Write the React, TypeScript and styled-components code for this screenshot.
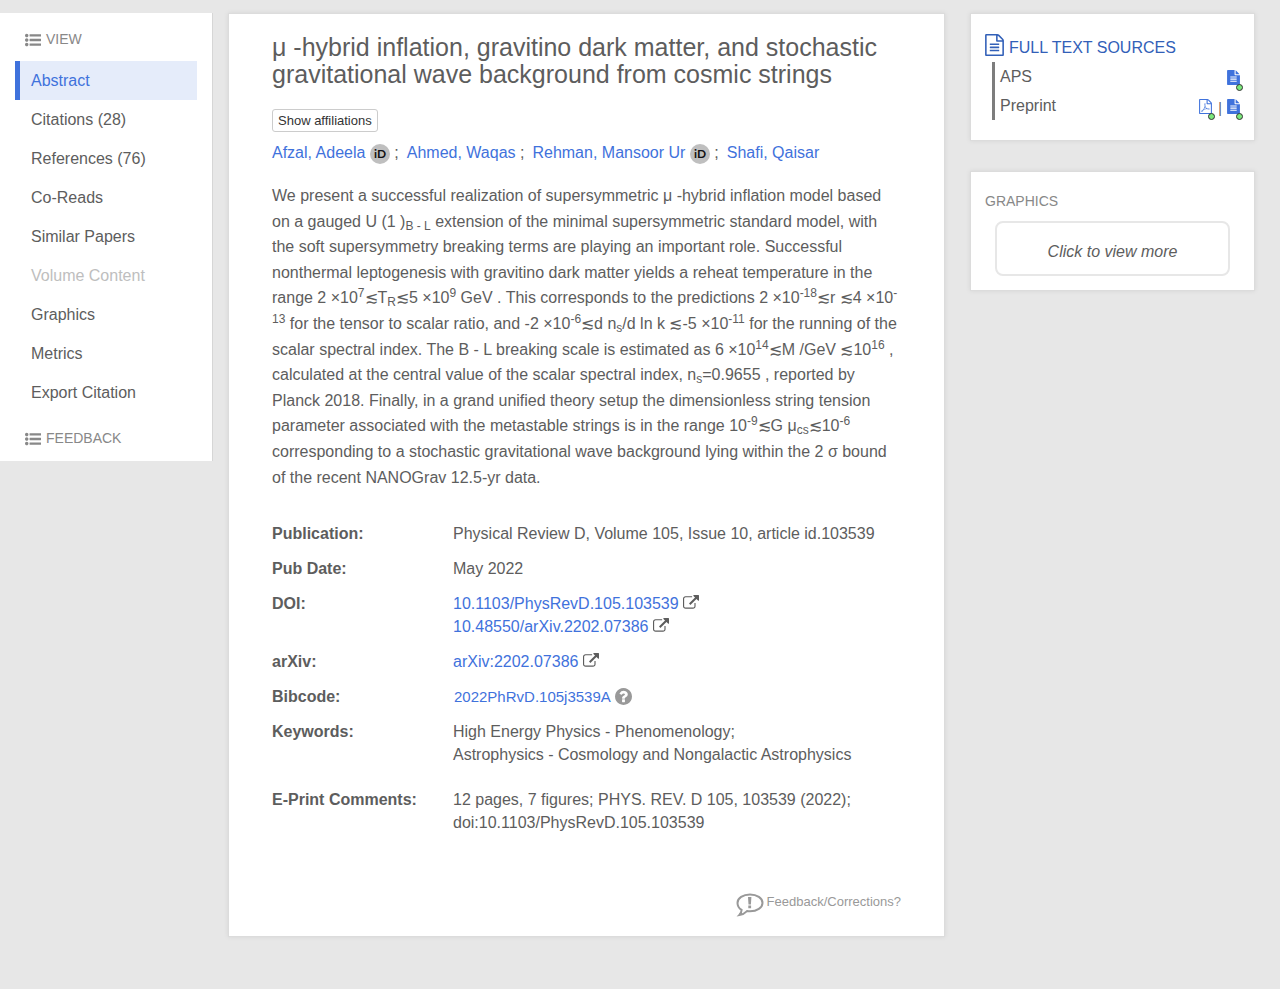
import React from "react";
import styled, { createGlobalStyle } from "styled-components";

const GlobalStyle = createGlobalStyle`
  *, *::before, *::after { box-sizing: border-box; }
  body {
    margin: 0;
    background: #e7e7e7;
    color: #5d5d5d;
    font-family: "Liberation Sans", Arial, sans-serif;
    font-size: 16px;
    line-height: 23px;
  }
  a { color: #3f72dc; text-decoration: none; }
  a:hover { text-decoration: underline; }
`;

/* ---------- icons ---------- */

const Icon = styled.svg<{ $w: number; $h: number }>`
  width: ${(p) => p.$w}px;
  height: ${(p) => p.$h}px;
  flex: none;
  fill: currentColor;
`;

const ListIcon = () => (
  <Icon $w={16} $h={16} viewBox="0 0 1792 1792" aria-hidden="true">
    <path d="M384 1408q0 80-56 136t-136 56-136-56-56-136 56-136 136-56 136 56 56 136zm0-512q0 80-56 136t-136 56-136-56-56-136 56-136 136-56 136 56 56 136zm1408 416v192q0 13-9.5 22.5t-22.5 9.5h-1216q-13 0-22.5-9.5t-9.5-22.5v-192q0-13 9.5-22.5t22.5-9.5h1216q13 0 22.5 9.5t9.5 22.5zm-1408-928q0 80-56 136t-136 56-136-56-56-136 56-136 136-56 136 56 56 136zm1408 416v192q0 13-9.5 22.5t-22.5 9.5h-1216q-13 0-22.5-9.5t-9.5-22.5v-192q0-13 9.5-22.5t22.5-9.5h1216q13 0 22.5 9.5t9.5 22.5zm0-512v192q0 13-9.5 22.5t-22.5 9.5h-1216q-13 0-22.5-9.5t-9.5-22.5v-192q0-13 9.5-22.5t22.5-9.5h1216q13 0 22.5 9.5t9.5 22.5z" />
  </Icon>
);

const InlineIcon = styled(Icon)`
  vertical-align: -2px;
`;

const ExternalIcon = () => (
  <InlineIcon $w={16} $h={16} viewBox="0 0 1792 1792" aria-hidden="true">
    <path d="M1408 928v320q0 119-84.5 203.5t-203.5 84.5h-832q-119 0-203.5-84.5t-84.5-203.5v-832q0-119 84.5-203.5t203.5-84.5h704q14 0 23 9t9 23v64q0 14-9 23t-23 9h-704q-66 0-113 47t-47 113v832q0 66 47 113t113 47h832q66 0 113-47t47-113v-320q0-14 9-23t23-9h64q14 0 23 9t9 23zm384-864v512q0 26-19 45t-45 19-45-19l-176-176-652 652q-10 10-23 10t-23-10l-114-114q-10-10-10-23t10-23l652-652-176-176q-19-19-19-45t19-45 45-19h512q26 0 45 19t19 45z" />
  </InlineIcon>
);

const HelpIcon = () => (
  <Icon $w={17} $h={17} viewBox="128 128 1536 1536" aria-hidden="true">
    <path d="M1024 1376v-192q0-14-9-23t-23-9h-192q-14 0-23 9t-9 23v192q0 14 9 23t23 9h192q14 0 23-9t9-23zm256-672q0-88-55.5-163t-138.5-116-170-41q-243 0-371 213-15 24 8 42l132 100q7 6 19 6 16 0 25-12 53-68 86-92 34-24 86-24 48 0 85.5 26t37.5 59q0 38-20 61t-68 45q-63 28-115.5 86.5t-52.5 125.5v36q0 14 9 23t23 9h192q14 0 23-9t9-23q0-19 21.5-49.5t54.5-49.5q32-18 49-28.5t46-35 44.5-48 28-60.5 12.5-81zm384 192q0 209-103 385.5t-279.5 279.5-385.5 103-385.5-103-279.5-279.5-103-385.5 103-385.5 279.5-279.5 385.5-103 385.5 103 279.5 279.5 103 385.5z" />
  </Icon>
);

const FileOutlineIcon = () => (
  <Icon $w={19} $h={22} viewBox="128 0 1536 1792" aria-hidden="true">
    <path d="M1596 380q28 28 48 76t20 88v1152q0 40-28 68t-68 28h-1344q-40 0-68-28t-28-68v-1600q0-40 28-68t68-28h896q40 0 88 20t76 48zm-444-244v376h376q-10-29-22-41l-313-313q-12-12-41-22zm384 1528v-1024h-416q-40 0-68-28t-28-68v-416h-768v1536h1280zm-1024-864q0-14 9-23t23-9h704q14 0 23 9t9 23v64q0 14-9 23t-23 9h-704q-14 0-23-9t-9-23v-64zm736 224q14 0 23 9t9 23v64q0 14-9 23t-23 9h-704q-14 0-23-9t-9-23v-64q0-14 9-23t23-9h704zm0 256q14 0 23 9t9 23v64q0 14-9 23t-23 9h-704q-14 0-23-9t-9-23v-64q0-14 9-23t23-9h704z" />
  </Icon>
);

const FileIcon = () => (
  <Icon $w={13} $h={15} viewBox="128 0 1536 1792" aria-hidden="true">
    <path d="M1596 476q14 14 28 36h-472v-472q22 14 36 28zm-476 164h544v1056q0 40-28 68t-68 28h-1344q-40 0-68-28t-28-68v-1600q0-40 28-68t68-28h800v544q0 40 28 68t68 28zm160 736v-64q0-14-9-23t-23-9h-704q-14 0-23 9t-9 23v64q0 14 9 23t23 9h704q14 0 23-9t9-23zm0-256v-64q0-14-9-23t-23-9h-704q-14 0-23 9t-9 23v64q0 14 9 23t23 9h704q14 0 23-9t9-23zm0-256v-64q0-14-9-23t-23-9h-704q-14 0-23 9t-9 23v64q0 14 9 23t23 9h704q14 0 23-9t9-23z" />
  </Icon>
);

const PdfIcon = () => (
  <Icon $w={13} $h={15} viewBox="128 0 1536 1792" aria-hidden="true">
    <path d="M1596 380q28 28 48 76t20 88v1152q0 40-28 68t-68 28h-1344q-40 0-68-28t-28-68v-1600q0-40 28-68t68-28h896q40 0 88 20t76 48zm-444-244v376h376q-10-29-22-41l-313-313q-12-12-41-22zm384 1528v-1024h-416q-40 0-68-28t-28-68v-416h-768v1536h1280zm-514-593q33 26 84 56 59-7 117-7 147 0 177 49 16 22 2 52 0 1-1 2l-2 2v1q-6 38-71 38-48 0-115-20t-130-53q-221 24-392 83-153 262-242 262-15 0-28-7l-24-12q-1-1-6-5-10-10-6-36 9-40 56-91.5t132-96.5q14-9 23 6 2 2 2 4 52-85 107-197 68-136 104-262-24-82-30.5-159.5t6.5-127.5q11-40 42-40h22q23 0 35 15 18 21 9 68-2 6-4 8 1 3 1 8v30q-2 123-14 192 55 164 146 238zm-576 411q52-24 137-158-51 40-87.5 84t-49.5 74zm398-920q-15 42-2 132 1-7 7-44 0-3 7-43 1-4 4-8-1-1-1-2t-1-2q-1-22-13-36 0 1-1 2v2zm-124 661q135-54 284-81-2-1-13-9.5t-16-13.5q-76-67-127-176-27 86-83 197-30 56-45 83zm646-16q-24-24-140-24 76 28 124 28 14 0 18-1 0-1-2-3z" />
  </Icon>
);

const FeedbackIcon = () => (
  <Icon $w={28} $h={24} viewBox="0 0 28 24" aria-hidden="true">
    <path
      d="M14 1.5c7 0 12.5 3.7 12.5 8.4S21 18.300 14 18.300c-1 0-2-.1-3-.2-1.900 2-4.300 3.400-7.600 3.900 1.300-1.300 2.100-3 2.200-5.100C3 15.300 1.500 12.800 1.500 9.900 1.500 5.200 7 1.500 14 1.500z"
      fill="none"
      stroke="currentColor"
      strokeWidth="2"
    />
    <path d="M12 4h3.400l-.5 7.400h-2.400zM12.300 12.500h2.800v2.700h-2.800z" />
  </Icon>
);

const OrcidMark = styled.svg`
  width: 20px;
  height: 20px;
  vertical-align: -6px;
`;

const OrcidIcon = () => (
  <OrcidMark viewBox="0 0 20 20" aria-hidden="true">
    <circle cx="10" cy="10" r="10" fill="#bfbfbf" />
    <text x="10" y="14" textAnchor="middle" fontFamily="Lato, sans-serif" fontSize="12" fontWeight="700" fill="#111">
      iD
    </text>
  </OrcidMark>
);

/* ---------- page frame ---------- */

const Page = styled.div`
  display: grid;
  grid-template-columns: 213px minmax(0, 1fr) 285px;
  align-items: start;
  padding: 13px 25px 53px 0;
`;

const Panel = styled.section`
  background: #fff;
  border: 1px solid #dcdcdc;
  box-shadow: 0 0 5px rgba(0, 0, 0, 0.08);
`;

/* ---------- left navigation ---------- */

const Sidebar = styled.nav`
  background: #fff;
  border-right: 1px solid #d6d6d6;
  padding: 15px 15px 11px;
`;

const NavHeading = styled.h2`
  display: flex;
  align-items: center;
  gap: 5px;
  margin: 0;
  padding-left: 10px;
  color: #888;
  font-size: 14px;
  font-weight: 400;
  line-height: 23px;
`;

const NavList = styled.ul`
  list-style: none;
  margin: 10px 0 15px;
  padding: 0;
`;

const NavLink = styled.a<{ $active?: boolean; $disabled?: boolean }>`
  display: block;
  padding-left: 11px;
  border-left: 5px solid ${(p) => (p.$active ? "#3f72dc" : "transparent")};
  background: ${(p) => (p.$active ? "#e5ecfa" : "transparent")};
  color: ${(p) => (p.$active ? "#3f72dc" : p.$disabled ? "#bebebe" : "#5d5d5d")};
  line-height: 39px;
  height: 39px;
`;

const navItems = [
  { label: "Abstract", active: true },
  { label: "Citations (28)" },
  { label: "References (76)" },
  { label: "Co-Reads" },
  { label: "Similar Papers" },
  { label: "Volume Content", disabled: true },
  { label: "Graphics" },
  { label: "Metrics" },
  { label: "Export Citation" },
];

/* ---------- article ---------- */

const Article = styled(Panel).attrs({ as: "article" })`
  margin: 0 25px 0 15px;
  padding: 20px 43px 19px;
`;

const Title = styled.h1`
  margin: 0 0 21px;
  font-size: 25px;
  font-weight: 400;
  line-height: 27px;
`;

const SmallButton = styled.button`
  display: block;
  height: 23px;
  padding: 0 5px;
  border: 1px solid #ccc;
  border-radius: 3px;
  background: #fff;
  color: #333;
  font: 13px/20px "Liberation Sans", Arial, sans-serif;
  cursor: pointer;
`;

const Authors = styled.ul`
  display: flex;
  flex-wrap: wrap;
  gap: 0 8px;
  list-style: none;
  margin: 9px 0 19px;
  padding: 0;
`;

const Abstract = styled.p`
  margin: 0 0 32px;
  line-height: 1.6;

  sub, sup {
    font-size: 12px;
    line-height: 0;
  }
  sup { vertical-align: 6px; }
  sub { vertical-align: -3px; }
`;

const Details = styled.dl`
  display: grid;
  grid-template-columns: 181px minmax(0, 1fr);
  row-gap: 12px;
  margin: 0;
`;

const Term = styled.dt`
  font-weight: 700;
`;

const Value = styled.dd<{ $spaced?: boolean }>`
  margin: 0 0 ${(p) => (p.$spaced ? 10 : 0)}px;
`;

const Line = styled.div``;

const Bibcode = styled.div`
  display: flex;
  align-items: center;
  gap: 4px;
  padding-left: 1px;
  font-size: 15px;
  color: #999;
`;

const Corrections = styled.button`
  display: flex;
  align-items: flex-start;
  gap: 3px;
  margin: 59px 0 0 auto;
  padding: 0;
  border: 0;
  background: none;
  color: #999;
  font: 13px/18px "Liberation Sans", Arial, sans-serif;
  cursor: pointer;
`;

/* ---------- right column ---------- */

const Aside = styled.aside`
  display: grid;
  gap: 30px;
`;

const SourcesPanel = styled(Panel)`
  padding: 20px 11px 20px 14px;
`;

const SourcesHeading = styled.h2`
  display: flex;
  align-items: flex-start;
  gap: 5px;
  margin: 0 0 6px;
  color: #3260b8;
  font-size: 16px;
  font-weight: 400;
  line-height: 27px;
  height: 22px;
`;

const SourceList = styled.ul`
  list-style: none;
  margin: 0 0 0 7px;
  padding: 0 0 0 5px;
  border-left: 3px solid #7d7d7d;
`;

const SourceRow = styled.li`
  display: flex;
  justify-content: space-between;
  height: 29px;
  line-height: 29px;
`;

const SourceLinks = styled.span`
  display: flex;
  align-items: flex-start;
  gap: 2px;
`;

const SourceLink = styled.a`
  position: relative;
  display: flex;
  width: 16px;
  padding-top: 8px;
`;

const OpenDot = styled.span`
  position: absolute;
  right: 0;
  top: 22px;
  width: 7px;
  height: 7px;
  border: 1px solid #333;
  border-radius: 50%;
  background: #7be87b;
`;

const Divider = styled.span`
  margin: 0 3px 0 1px;
  font-size: 14px;
  line-height: 34px;
`;

const GraphicsPanel = styled(Panel)`
  padding: 18px 14px 14px;
`;

const GraphicsHeading = styled.h2`
  margin: 0 0 8px;
  color: #888;
  font-size: 14px;
  font-weight: 400;
  line-height: 23px;
`;

const GraphicsButton = styled.button`
  display: block;
  width: calc(100% - 20px);
  height: 55px;
  margin: 0 10px;
  padding: 6px 0 0;
  border: 2px solid #e7e7e7;
  border-radius: 8px;
  background: #fff;
  color: #5d5d5d;
  font: italic 16px/23px "Liberation Sans", Arial, sans-serif;
  cursor: pointer;
`;

const authors = [
  { name: "Afzal, Adeela", orcid: true },
  { name: "Ahmed, Waqas" },
  { name: "Rehman, Mansoor Ur", orcid: true },
  { name: "Shafi, Qaisar" },
];

export default function App() {
  return (
    <>
      <GlobalStyle />
      <Page>
        <Sidebar aria-label="Article views">
          <NavHeading>
            <ListIcon />
            VIEW
          </NavHeading>
          <NavList>
            {navItems.map((item) => (
              <li key={item.label}>
                <NavLink href="#" $active={item.active} $disabled={item.disabled}>
                  {item.label}
                </NavLink>
              </li>
            ))}
          </NavList>
          <NavHeading>
            <ListIcon />
            FEEDBACK
          </NavHeading>
        </Sidebar>

        <Article>
          <Title>
            μ -hybrid inflation, gravitino dark matter, and stochastic gravitational wave background from cosmic
            strings
          </Title>
          <SmallButton type="button">Show affiliations</SmallButton>
          <Authors>
            {authors.map((author, i) => (
              <li key={author.name}>
                <a href="#">{author.name}</a>
                {author.orcid && (
                  <>
                    {" "}
                    <a href="#" aria-label={`ORCID of ${author.name}`}>
                      <OrcidIcon />
                    </a>
                  </>
                )}
                {i < authors.length - 1 && " ;"}
              </li>
            ))}
          </Authors>

          <Abstract>
            We present a successful realization of supersymmetric μ -hybrid inflation model based on a gauged U (1 )
            <sub>B - L</sub> extension of the minimal supersymmetric standard model, with the soft supersymmetry
            breaking terms are playing an important role. Successful nonthermal leptogenesis with gravitino dark
            matter yields a reheat temperature in the range 2 ×10<sup>7</sup>≲T<sub>R</sub>≲5 ×10<sup>9</sup> GeV .
            This corresponds to the predictions 2 ×10<sup>-18</sup>≲r ≲4 ×10<sup>-13</sup> for the tensor to scalar
            ratio, and -2 ×10<sup>-6</sup>≲d n<sub>s</sub>/d ln k ≲-5 ×10<sup>-11</sup> for the running of the
            scalar spectral index. The B - L breaking scale is estimated as 6 ×10<sup>14</sup>≲M /GeV ≲10
            <sup>16</sup> , calculated at the central value of the scalar spectral index, n<sub>s</sub>=0.9655 ,
            reported by Planck 2018. Finally, in a grand unified theory setup the dimensionless string tension
            parameter associated with the metastable strings is in the range 10<sup>-9</sup>≲G μ<sub>cs</sub>≲10
            <sup>-6</sup> corresponding to a stochastic gravitational wave background lying within the 2 σ bound of
            the recent NANOGrav 12.5-yr data.
          </Abstract>

          <Details>
            <Term>Publication:</Term>
            <Value>Physical Review D, Volume 105, Issue 10, article id.103539</Value>
            <Term>Pub Date:</Term>
            <Value>May 2022</Value>
            <Term>DOI:</Term>
            <Value>
              <Line>
                <a href="#">10.1103/PhysRevD.105.103539</a> <ExternalIcon />
              </Line>
              <Line>
                <a href="#">10.48550/arXiv.2202.07386</a> <ExternalIcon />
              </Line>
            </Value>
            <Term>arXiv:</Term>
            <Value>
              <a href="#">arXiv:2202.07386</a> <ExternalIcon />
            </Value>
            <Term>Bibcode:</Term>
            <Value>
              <Bibcode>
                <a href="#">2022PhRvD.105j3539A</a>
                <HelpIcon />
              </Bibcode>
            </Value>
            <Term>Keywords:</Term>
            <Value $spaced>
              <Line>High Energy Physics - Phenomenology;</Line>
              <Line>Astrophysics - Cosmology and Nongalactic Astrophysics</Line>
            </Value>
            <Term>E-Print Comments:</Term>
            <Value>
              <Line>12 pages, 7 figures; PHYS. REV. D 105, 103539 (2022);</Line>
              <Line>doi:10.1103/PhysRevD.105.103539</Line>
            </Value>
          </Details>

          <Corrections type="button">
            <FeedbackIcon />
            Feedback/Corrections?
          </Corrections>
        </Article>

        <Aside>
          <SourcesPanel>
            <SourcesHeading>
              <FileOutlineIcon />
              FULL TEXT SOURCES
            </SourcesHeading>
            <SourceList>
              <SourceRow>
                APS
                <SourceLinks>
                  <SourceLink href="#" aria-label="APS article">
                    <FileIcon />
                    <OpenDot />
                  </SourceLink>
                </SourceLinks>
              </SourceRow>
              <SourceRow>
                Preprint
                <SourceLinks>
                  <SourceLink href="#" aria-label="Preprint PDF">
                    <PdfIcon />
                    <OpenDot />
                  </SourceLink>
                  <Divider>|</Divider>
                  <SourceLink href="#" aria-label="Preprint article">
                    <FileIcon />
                    <OpenDot />
                  </SourceLink>
                </SourceLinks>
              </SourceRow>
            </SourceList>
          </SourcesPanel>

          <GraphicsPanel>
            <GraphicsHeading>GRAPHICS</GraphicsHeading>
            <GraphicsButton type="button">Click to view more</GraphicsButton>
          </GraphicsPanel>
        </Aside>
      </Page>
    </>
  );
}
